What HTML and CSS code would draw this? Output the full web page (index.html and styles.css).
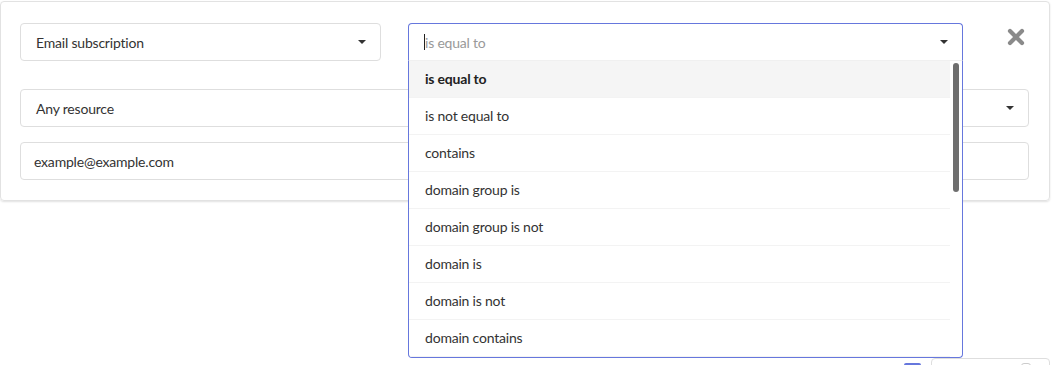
FILE: index.html
```html
<!DOCTYPE html>
<html lang="en">
<head>
    <meta charset="UTF-8">
    <meta name="viewport" content="width=device-width, initial-scale=1.0">
    <title>Filter Rule</title>
    <link rel="stylesheet" href="styles.css">
</head>
<body>
    <div class="rule-card">
        <div class="rule-top">
            <div class="select field-type">
                <span class="select-value">Email subscription</span>
                <span class="caret"></span>
            </div>
            <div class="select operator is-open">
                <span class="cursor"></span>
                <span class="placeholder">is equal to</span>
                <span class="caret"></span>
                <div class="menu">
                    <div class="option is-focused">is equal to</div>
                    <div class="option">is not equal to</div>
                    <div class="option">contains</div>
                    <div class="option">domain group is</div>
                    <div class="option">domain group is not</div>
                    <div class="option">domain is</div>
                    <div class="option">domain is not</div>
                    <div class="option">domain contains</div>
                    <div class="scroll-thumb"></div>
                </div>
            </div>
            <button class="remove-btn" title="Remove">
                <svg width="18" height="18" viewBox="0 0 18 18">
                    <path d="M3 3 L15 15 M15 3 L3 15" stroke="#8a8a8a" stroke-width="4.2" stroke-linecap="round"/>
                </svg>
            </button>
        </div>
        <div class="select resource">
            <span class="select-value">Any resource</span>
            <span class="caret"></span>
        </div>
        <input class="text-input" type="text" value="example@example.com">
    </div>

    <div class="footer">
        <span class="footer-check"></span>
        <span class="footer-box"><span class="footer-dot"></span></span>
    </div>
</body>
</html>
```

FILE: styles.css
```css
body {
    margin: 0;
    padding-top: 1px;
    font-family: Lato, "Open Sans", sans-serif;
    font-size: 14px;
    letter-spacing: -0.2px;
    color: #333;
    background: #fff;
}
.rule-card {
    width: 1009px;
    padding: 21px 20px 20px 19px;
    border: 1px solid #e2e2e2;
    border-radius: 4px;
    box-shadow: 0 1px 2px rgba(0, 0, 0, 0.12);
    display: flex;
    flex-direction: column;
}
.rule-top {
    display: flex;
    align-items: flex-start;
    margin-bottom: 28px;
}
.select {
    position: relative;
    height: 36px;
    border: 1px solid #dedede;
    border-radius: 4px;
    display: flex;
    align-items: center;
    padding: 0 14px 0 15px;
    background: #fff;
}
.field-type {
    width: 330px;
    margin-right: 27px;
}
.operator {
    width: 524px;
}
.select-value {
    flex: 1;
}
.caret {
    width: 0;
    height: 0;
    border-left: 4px solid transparent;
    border-right: 4px solid transparent;
    border-top: 4px solid #333;
}
.is-open {
    border-color: #6677dd;
    border-bottom-color: #f0f0f0;
    border-radius: 4px 4px 0 0;
    z-index: 2;
}
.cursor {
    width: 1px;
    height: 16px;
    background: #222;
}
.placeholder {
    flex: 1;
    color: #999;
}
.menu {
    position: absolute;
    top: 37px;
    left: -1px;
    right: -1px;
    height: 296px;
    overflow: hidden;
    background: #fff;
    border: 1px solid #6677dd;
    border-top: none;
    border-radius: 0 0 4px 4px;
    padding-right: 12px;
}
.option {
    height: 36px;
    line-height: 36px;
    padding-left: 16px;
    border-bottom: 1px solid #f3f3f3;
    color: #333;
}
.option.is-focused {
    background: #f5f5f5;
    font-weight: bold;
    color: #222;
}
.scroll-thumb {
    position: absolute;
    top: 2px;
    right: 3px;
    width: 6px;
    height: 129px;
    border-radius: 3px;
    background: #6e6e6e;
}
.remove-btn {
    margin: 5px 0 0 44px;
    padding: 0;
    border: none;
    background: none;
    cursor: pointer;
}
.resource {
    margin-bottom: 15px;
}
.text-input {
    height: 38px;
    box-sizing: border-box;
    border: 1px solid #dedede;
    border-radius: 4px;
    padding: 0 13px;
    font-family: inherit;
    font-size: 14px;
    letter-spacing: -0.2px;
    color: #333;
}
.footer {
    display: flex;
    justify-content: flex-end;
    align-items: flex-start;
    margin-top: 157px;
    padding-right: 6px;
}
.footer-check {
    width: 17px;
    height: 8px;
    margin-top: 5px;
    background: #6677dd;
    border-radius: 2px 2px 0 0;
    margin-right: 10px;
}
.footer-box {
    width: 117px;
    height: 20px;
    border: 1px solid #dedede;
    border-radius: 4px;
    position: relative;
}
.footer-dot {
    position: absolute;
    top: 4px;
    right: 18px;
    width: 8px;
    height: 8px;
    border: 1px solid #ccc;
    border-radius: 3px;
}
```
